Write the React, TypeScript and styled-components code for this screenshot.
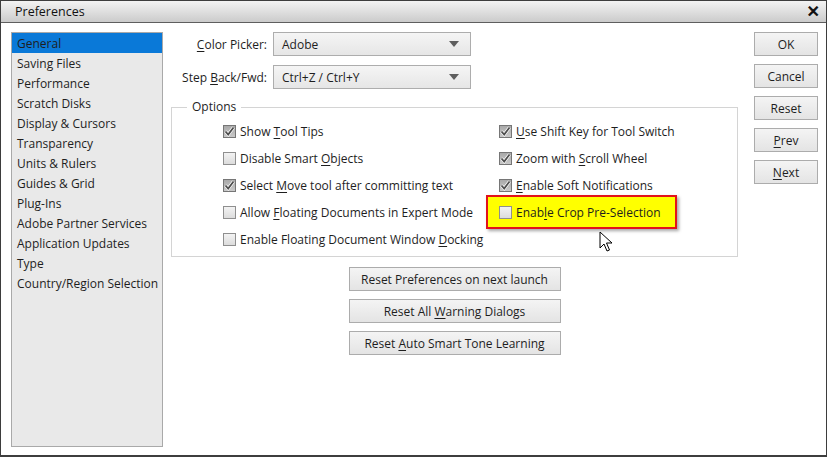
import React from "react";
import styled, { createGlobalStyle, css } from "styled-components";

const Global = createGlobalStyle`
  html, body { margin: 0; padding: 0; background: #fff; }
  body { font-family: "Open Sans", "DejaVu Sans", sans-serif; font-size: 12px; color: #1e1e1e; }
  * { box-sizing: border-box; }
`;

const Window = styled.div`
  width: 827px;
  height: 457px;
  border: 1px solid #3d3d3d;
  border-bottom-width: 2px;
  display: flex;
  flex-direction: column;
  background: #fff;
`;

const TitleBar = styled.div`
  height: 22px;
  flex: none;
  display: flex;
  align-items: center;
  justify-content: space-between;
  padding: 0 6px 0 14px;
  background: linear-gradient(#f3f3f3, #cbcbcb);
  border-bottom: 1px solid #5e5e5e;
  font-size: 12.5px;
  color: #111;
`;

const Close = styled.span`
  font-size: 16px;
  font-weight: 700;
  line-height: 1;
  font-family: "DejaVu Sans", sans-serif;
  -webkit-text-stroke: 0.6px #000;
`;

const Body = styled.div`
  flex: 1;
  display: flex;
  align-items: stretch;
  padding: 9px 8px 8px 10px;
`;

const Sidebar = styled.ul`
  list-style: none;
  margin: 0;
  padding: 0;
  width: 152px;
  flex: none;
  background: #e9e9e9;
  border: 1px solid #a9a9a9;
`;

const NavItem = styled.li<{ $active?: boolean }>`
  height: 20px;
  line-height: 21px;
  padding-left: 5px;
  white-space: nowrap;
  ${(p) =>
    p.$active &&
    css`
      background: #0a79d8;
    `}
`;

const Main = styled.div`
  width: 567px;
  margin-left: 8px;
  flex: none;
  display: flex;
  flex-direction: column;
`;

const FormGrid = styled.div`
  display: grid;
  grid-template-columns: 96px 198px;
  column-gap: 6px;
  row-gap: 9px;
  align-items: center;
`;

const FieldLabel = styled.span`
  text-align: right;
  white-space: nowrap;
`;

const Select = styled.div`
  height: 24px;
  display: flex;
  align-items: center;
  justify-content: space-between;
  padding: 0 11px 0 8px;
  border: 1px solid #adadad;
  background: linear-gradient(#f5f5f5, #e6e6e6);
`;

const Arrow = styled.span`
  width: 0;
  height: 0;
  border-left: 5px solid transparent;
  border-right: 5px solid transparent;
  border-top: 6px solid #5e5e5e;
`;

const Group = styled.div`
  position: relative;
  margin-top: 18px;
  height: 150px;
  border: 1px solid #d4d4d4;
  display: grid;
  grid-template-columns: 276px 1fr;
  grid-auto-flow: column;
  grid-template-rows: repeat(5, 27px);
  padding: 10px 0 0 51px;
`;

const Legend = styled.span`
  position: absolute;
  top: -10px;
  left: 15px;
  padding: 0 5px;
  background: #fff;
  line-height: 18px;
`;

const Option = styled.label<{ $highlight?: boolean }>`
  position: relative;
  justify-self: start;
  display: inline-flex;
  align-items: center;
  gap: 4px;
  white-space: nowrap;
  isolation: isolate;
  ${(p) =>
    p.$highlight &&
    css`
      &::before {
        content: "";
        position: absolute;
        left: -13px;
        right: -16px;
        top: -4px;
        bottom: -3px;
        background: #ffff00;
        border: 2px solid #e2121b;
        box-shadow: 2px 2px 3px rgba(0, 0, 0, 0.35);
        z-index: -1;
      }
    `}
`;

const Box = styled.span<{ $checked?: boolean }>`
  width: 13px;
  height: 13px;
  flex: none;
  display: inline-flex;
  align-items: center;
  justify-content: center;
  border: 1px solid ${(p) => (p.$checked ? "#767676" : "#8f8f8f")};
  background: ${(p) =>
    p.$checked
      ? "linear-gradient(#a9a9a9, #c9c9c9)"
      : "linear-gradient(#f3f3f3, #dcdcdc)"};
`;

const Ul = styled.u`
  text-decoration: underline;
  text-underline-offset: 2px;
`;

const Cursor = styled.svg`
  position: absolute;
  left: 427px;
  top: 123px;
`;

const CenterStack = styled.div`
  margin-top: 10px;
  display: flex;
  flex-direction: column;
  align-items: center;
  gap: 8px;
`;

const Button = styled.div<{ $w: number }>`
  width: ${(p) => p.$w}px;
  height: 24px;
  display: flex;
  align-items: center;
  justify-content: center;
  border: 1px solid #acacac;
  background: linear-gradient(#f4f4f4, #e4e4e4);
  white-space: pre;
`;

const SideButtons = styled.div`
  margin-left: 16px;
  display: flex;
  flex-direction: column;
  gap: 8px;
`;

const Check = () => (
  <svg width="11" height="11" viewBox="0 0 11 11">
    <path d="M1.5 5.5 L4.2 8.5 L9.5 1.5" fill="none" stroke="#ffffff" strokeWidth="3.2" />
    <path d="M1.5 5.5 L4.2 8.5 L9.5 1.5" fill="none" stroke="#4d4d4d" strokeWidth="1.8" />
  </svg>
);

type Opt = { label: React.ReactNode; checked?: boolean; highlight?: boolean };

const left: Opt[] = [
  { label: <>Show <Ul>T</Ul>ool Tips</>, checked: true },
  { label: <>Disable Smart <Ul>O</Ul>bjects</> },
  { label: <>Select <Ul>M</Ul>ove tool after committing text</>, checked: true },
  { label: <>Allow <Ul>F</Ul>loating Documents in Expert Mode</> },
  { label: <>Enable Floating Document Window <Ul>D</Ul>ocking</> },
];

const right: Opt[] = [
  { label: <><Ul>U</Ul>se Shift Key for Tool Switch</>, checked: true },
  { label: <>Zoom with <Ul>S</Ul>croll Wheel</>, checked: true },
  { label: <><Ul>E</Ul>nable Soft Notifications</>, checked: true },
  { label: <>Enab<Ul>l</Ul>e Crop Pre-Selection</>, highlight: true },
];

const nav = [
  "General",
  "Saving Files",
  "Performance",
  "Scratch Disks",
  "Display & Cursors",
  "Transparency",
  "Units & Rulers",
  "Guides & Grid",
  "Plug-Ins",
  "Adobe Partner Services",
  "Application Updates",
  "Type",
  "Country/Region Selection",
];

const renderOpt = (o: Opt, i: number, col: number) => (
  <Option
    key={i}
    $highlight={o.highlight}
    style={{ gridColumn: col, gridRow: i + 1 }}
  >
    <Box $checked={o.checked}>{o.checked && <Check />}</Box>
    <span>{o.label}</span>
  </Option>
);

export default function App() {
  return (
    <>
      <Global />
      <Window>
        <TitleBar>
          <span>Preferences</span>
          <Close>✕</Close>
        </TitleBar>
        <Body>
          <Sidebar>
            {nav.map((n, i) => (
              <NavItem key={n} $active={i === 0}>
                {n}
              </NavItem>
            ))}
          </Sidebar>
          <Main>
            <FormGrid>
              <FieldLabel>
                <Ul>C</Ul>olor Picker:
              </FieldLabel>
              <Select>
                <span>Adobe</span>
                <Arrow />
              </Select>
              <FieldLabel>
                Step <Ul>B</Ul>ack/Fwd:
              </FieldLabel>
              <Select>
                <span>Ctrl+Z / Ctrl+Y</span>
                <Arrow />
              </Select>
            </FormGrid>
            <Group>
              <Legend>Options</Legend>
              {left.map((o, i) => renderOpt(o, i, 1))}
              {right.map((o, i) => renderOpt(o, i, 2))}
              <Cursor width="14" height="22" viewBox="0 0 14 22">
                <path
                  d="M1 1 L1 17 L5 13 L8 20 L10.5 19 L7.5 12 L13 12 Z"
                  fill="#fff"
                  stroke="#000"
                  strokeWidth="1"
                  strokeLinejoin="round"
                />
              </Cursor>
            </Group>
            <CenterStack>
              <Button $w={212}>
                <span>Reset Preferences on next launch</span>
              </Button>
              <Button $w={212}>
                <span>
                  Reset All <Ul>W</Ul>arning Dialogs
                </span>
              </Button>
              <Button $w={212}>
                <span>
                  Reset <Ul>A</Ul>uto Smart Tone Learning
                </span>
              </Button>
            </CenterStack>
          </Main>
          <SideButtons>
            <Button $w={64}>OK</Button>
            <Button $w={64}>Cancel</Button>
            <Button $w={64}>Reset</Button>
            <Button $w={64}>
              <span>
                <Ul>P</Ul>rev
              </span>
            </Button>
            <Button $w={64}>
              <span>
                <Ul>N</Ul>ext
              </span>
            </Button>
          </SideButtons>
        </Body>
      </Window>
    </>
  );
}
